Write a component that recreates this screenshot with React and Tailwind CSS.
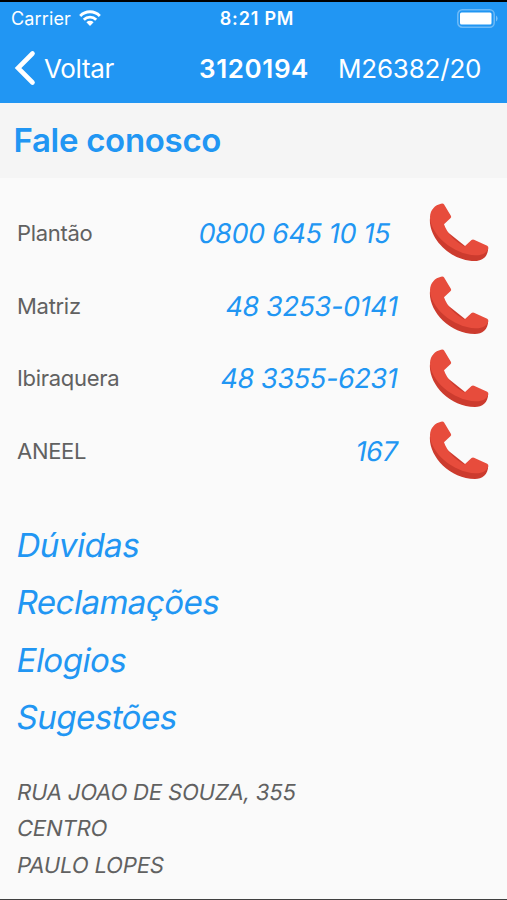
import React from 'react';

const contacts = [
    { label: 'Plantão', phone: '0800 645 10 15', shift: 'mr-[40px]' },
    { label: 'Matriz', phone: '48 3253-0141', shift: 'mr-[33px]' },
    { label: 'Ibiraquera', phone: '48 3355-6231', shift: 'mr-[33px]' },
    { label: 'ANEEL', phone: '167', shift: 'mr-[33px]' },
];

const links = ['Dúvidas', 'Reclamações', 'Elogios', 'Sugestões'];

const address = ['RUA JOAO DE SOUZA, 355', 'CENTRO', 'PAULO LOPES'];

const WifiIcon = () => (
    <svg width="22" height="16" viewBox="0 0 22 16" fill="none" stroke="white" strokeWidth="2.9">
        <path d="M1.2 5.9a13.8 13.8 0 0 1 19.6 0" />
        <path d="M4.8 9.7a8.8 8.8 0 0 1 12.4 0" />
        <path d="M11 16l-3.6-3.7a5.1 5.1 0 0 1 7.2 0z" fill="white" stroke="none" />
    </svg>
);

const BatteryIcon = () => (
    <svg width="42" height="19" viewBox="0 0 42 19">
        <rect x="0.8" y="0.8" width="36.4" height="17.4" rx="4.5" fill="none" stroke="white" strokeOpacity="0.35" strokeWidth="1.5" />
        <rect x="3" y="3.5" width="31.5" height="12" rx="1.5" fill="white" />
        <path d="M39 6.5a3.6 3.6 0 0 1 0 6z" fill="white" fillOpacity="0.4" />
    </svg>
);

const BackIcon = () => (
    <svg width="22" height="36" viewBox="0 0 22 36" fill="none" stroke="white" strokeWidth="4.6" strokeLinecap="round">
        <path d="M18.500 3.500L4 18l14.500 14.500" />
    </svg>
);

const PhoneIcon = () => (
    <svg width="60" height="60" viewBox="0 0 60 60">
        <path
            d="M1 15C-1 34 20 58 46 58C53 58 59.200 54 59.200 44.500L36 43z"
            fill="#cc3b2e"
        />
        <path
            d="M12 .8Q14.200 .2 15.100 1.600L22 13Q22.600 14.200 21.400 15.300L15 21.200C18 30 26 39 35.500 43.400L42.500 37Q43.700 36.100 45 36.700L58.200 42.800Q59.600 43.600 59.200 45.500C58 50 53 52.600 46.500 52.300C24 51.500 1 31 1 14C1.300 7 6 2 12 .8z"
            fill="#e74c3c"
        />
    </svg>
);

const App = () => {
    return (
        <div className="flex h-[900px] w-[507px] flex-col overflow-hidden border-t-2 border-b border-t-black border-b-neutral-700 bg-[#fafafa] font-['Inter',sans-serif] whitespace-nowrap">
            <header className="h-[101px] shrink-0 bg-[#2196f3] text-white">
                <div className="grid h-8 grid-cols-3 items-center pr-2 pl-[11px] text-[18px]">
                    <div className="flex items-center gap-2">
                        <span className="tracking-[0.15px]">Carrier</span>
                        <WifiIcon />
                    </div>
                    <span className="pl-1 text-center font-semibold tracking-[0.8px]">8:21 PM</span>
                    <div className="flex justify-end">
                        <BatteryIcon />
                    </div>
                </div>
                <div className="flex h-[68px] items-center pl-[14px] text-[26px]">
                    <BackIcon />
                    <span className="ml-2 w-[155px] tracking-[-0.3px]">Voltar</span>
                    <span className="w-[139px] font-semibold tracking-[0.6px]">3120194</span>
                    <span className="tracking-[-0.2px]">M26382/20</span>
                </div>
            </header>

            <div className="flex h-[75px] shrink-0 items-center bg-[#f5f5f5] pl-[13.5px]">
                <h1 className="text-[33px] font-semibold tracking-[-0.3px] text-[#2196f3]">Fale conosco</h1>
            </div>

            <ul className="mt-[19px] pr-[18px] pl-[17px]">
                {contacts.map((item) => (
                    <li key={item.label} className="flex h-[72.700px] items-center">
                        <span className="flex-1 text-[22px] tracking-[-0.3px] text-[#616161]">{item.label}</span>
                        <span className={`origin-[0_75%] -skew-x-10 pt-[2px] text-[27px] tracking-[-0.35px] text-[#2196f3] ${item.shift}`}>{item.phone}</span>
                        <PhoneIcon />
                    </li>
                ))}
            </ul>

            <nav className="mt-[29px] flex flex-col pl-[15px] text-[33px] tracking-[-0.5px] text-[#2196f3]">
                {links.map((link) => (
                    <a key={link} className="flex h-[57.500px] origin-[0_70%] -skew-x-10 items-center">{link}</a>
                ))}
            </nav>

            <address className="mt-[27px] pl-4 text-[22px] tracking-[-0.15px] text-[#616161] not-italic">
                {address.map((line) => (
                    <p key={line} className="origin-[0_70%] -skew-x-10 leading-[36.500px]">{line}</p>
                ))}
            </address>
        </div>
    );
};

export default App;
